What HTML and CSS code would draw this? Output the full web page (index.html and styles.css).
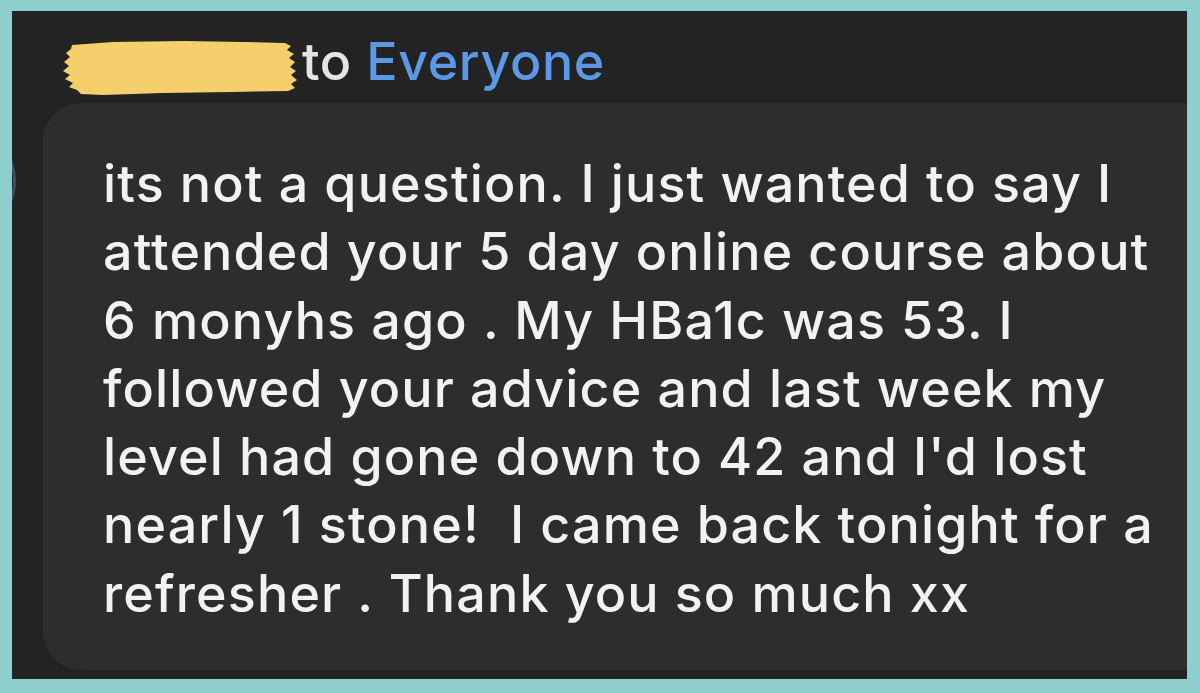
FILE: index.html
```html
<!DOCTYPE html>
<html lang="en">
<head>
<meta charset="utf-8">
<title>Chat message</title>
<link rel="stylesheet" href="styles.css">
</head>
<body>
<div class="frame">
  <div class="panel">
    <span class="avatar-edge"></span>
    <div class="header">
      <span class="sender">
        <svg class="redact" width="236" height="58" viewBox="0 0 236 58" aria-hidden="true">
          <path d="M9,5 L50,2 L120,1 L180,2 L222,3 L228,6 L224,10 L231,14 L226,18 L232,22 L227,27 L233,31 L228,35 L234,40 L228,44 L232,48 L225,51 L170,52 L100,53 L40,55 L18,54 L14,50 L6,47 L10,43 L2,39 L7,35 L0,31 L6,26 L1,22 L7,17 L3,13 L8,9 Z" fill="#f5cf6b"/>
        </svg>
      </span><span class="to">to </span><span class="everyone">Everyone</span>
    </div>
    <div class="bubble">
      <p class="message">its not a question. I just wanted to say I<br>attended your 5 day online course about<br>6 monyhs ago . My HBa1c was 53. I<br>followed your advice and last week my<br>level had gone down to 42 and I'd lost<br>nearly 1 stone!&nbsp; I came back tonight for a<br>refresher . Thank you so much xx</p>
    </div>
  </div>
</div>
</body>
</html>
```

FILE: styles.css
```css
html, body {
  margin: 0;
  padding: 0;
  height: 100%;
}

body {
  background: #8ecfce;
  font-family: "Inter", "Liberation Sans", sans-serif;
}

.frame {
  box-sizing: border-box;
  height: 693px;
  padding: 11px 13px 14px 12px;
}

.panel {
  position: relative;
  height: 100%;
  background: #232323;
  overflow: hidden;
  display: flex;
  flex-direction: column;
}

.avatar-edge {
  position: absolute;
  left: -76px;
  top: 122px;
  width: 80px;
  height: 96px;
  border-radius: 50%;
  border: 3px solid #3a516b;
  box-sizing: border-box;
}

.header {
  height: 92px;
  box-sizing: border-box;
  padding: 19px 0 0 51px;
  font-size: 52px;
  font-weight: 500;
  letter-spacing: 0.6px;
  line-height: 63px;
  white-space: nowrap;
}

.sender {
  position: relative;
  display: inline-block;
  width: 239px;
  height: 40px;
}

.redact {
  position: absolute;
  left: 0;
  top: 0;
}

.to {
  color: #e4e4e4;
}

.everyone {
  color: #5b98e6;
}

.bubble {
  flex: 1;
  margin: 0 -40px 9px 31px;
  background: #2d2d2d;
  border-radius: 38px;
  padding: 47px 0 0 60px;
}

.message {
  margin: 0;
  color: #f2f2f2;
  font-size: 52px;
  font-weight: 500;
  letter-spacing: 1.15px;
  line-height: 68.3px;
  white-space: nowrap;
}
```
